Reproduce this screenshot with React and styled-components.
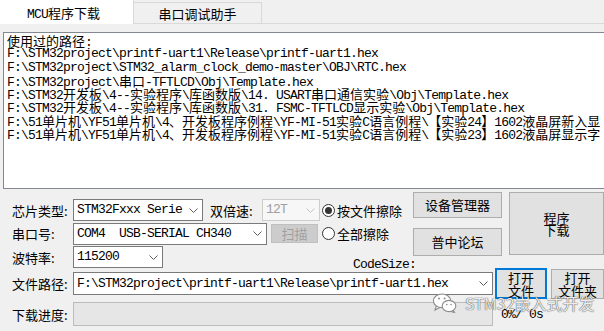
import styled, { createGlobalStyle, css } from 'styled-components'

const history = [
  '使用过的路径:',
  'F:\\STM32project\\printf-uart1\\Release\\printf-uart1.hex',
  'F:\\STM32project\\STM32_alarm_clock_demo-master\\OBJ\\RTC.hex',
  'F:\\STM32project\\串口-TFTLCD\\Obj\\Template.hex',
  'F:\\STM32开发板\\4--实验程序\\库函数版\\14. USART串口通信实验\\Obj\\Template.hex',
  'F:\\STM32开发板\\4--实验程序\\库函数版\\31. FSMC-TFTLCD显示实验\\Obj\\Template.hex',
  'F:\\51单片机\\YF51单片机\\4、开发板程序例程\\YF-MI-51实验C语言例程\\【实验24】1602液晶屏新入显',
  'F:\\51单片机\\YF51单片机\\4、开发板程序例程\\YF-MI-51实验C语言例程\\【实验23】1602液晶屏显示字',
]

// latin runs are 7px wide, han runs 13px, like the old bitmap font
const HAN = /([\u2e80-\u9fff\u3000-\u303f\uff00-\uffef]+)/
const Mixed = ({ text }) =>
  text.split(HAN).map((s, i) => (i % 2 ? <Han key={i}>{s}</Han> : s))

const Chevron = ({ off }) => (
  <Caret>
    <svg width="9" height="5" viewBox="0 0 9 5">
      <polyline points="0.5,0.5 4.5,4.5 8.5,0.5" fill="none" stroke={off ? '#c4c4c4' : '#606060'} strokeWidth="1" />
    </svg>
  </Caret>
)

const Select = ({ value, w, h, ml, off }) => (
  <Combo $w={w} $h={h} $ml={ml} $off={off}>
    <ComboText><Mixed text={value} /></ComboText>
    <Chevron off={off} />
  </Combo>
)

const Radio = ({ checked, label, ml }) => (
  <RadioWrap $ml={ml}>
    <RadioDot $on={checked} />
    <span>{label}</span>
  </RadioWrap>
)

const WeChat = () => (
  <svg width="25" height="20" viewBox="0 0 25 20">
    <g fill="#fff" stroke="#8c8c8c" strokeWidth="1.1">
      <polygon points="4.5,12.5 3,17 8.5,14" />
      <ellipse cx="10" cy="7.8" rx="8.6" ry="6.8" />
      <polygon points="20.5,16.5 22.5,19.5 17.5,18" />
      <ellipse cx="17" cy="13" rx="6.8" ry="5.6" />
    </g>
    <g fill="#8c8c8c">
      <circle cx="7" cy="5.6" r="1" />
      <circle cx="12.6" cy="5.6" r="1" />
      <circle cx="14.8" cy="11.6" r="0.8" />
      <circle cx="19" cy="11.6" r="0.8" />
    </g>
  </svg>
)

export default () => {
  return (
    <Page>
      <Global />
      <TabStrip>
        <Tab $w={134} $active><TabLabel><Mixed text="MCU程序下载" /></TabLabel></Tab>
        <Tab $w={128}><TabLabel>串口调试助手</TabLabel></Tab>
      </TabStrip>

      <TextBox>
        {history.map((l, i) => <Line key={i}><Mixed text={l} /></Line>)}
      </TextBox>

      <Controls>
        <Fields>
          <Row>
            <Label>芯片类型:</Label>
            <Select value="STM32Fxxx Serie" w={130} />
            <Label $w={52} $ml={7}>双倍速:</Label>
            <Select value="12T" w={58} off />
            <Radio checked label="按文件擦除" ml={2} />
          </Row>
          <Row>
            <Label>串口号:</Label>
            <Select value="COM4  USB-SERIAL CH340" w={194} />
            <Btn $w={47} $h={19} $m="0 0 0 4px" disabled>扫描</Btn>
            <Radio label="全部擦除" ml={4} />
          </Row>
          <Row>
            <Label>波特率:</Label>
            <Select value="115200" w={90} />
            <Note>CodeSize:</Note>
          </Row>
        </Fields>
        <Side>
          <Btn $w={89} $h={26}>设备管理器</Btn>
          <Btn $w={89} $h={28}>普中论坛</Btn>
        </Side>
        <Btn $w={95} $h={63} $m="3px 0 0 7px" $lh={12}>程序<br />下载</Btn>
      </Controls>

      <WideRow $h={31}>
        <Label>文件路径:</Label>
        <Select value="F:\STM32project\printf-uart1\Release\printf-uart1.hex" w={420} h={23} />
        <Btn $w={52} $h={31} $m="0 0 0 2px" $lh={13} $focus>打开<br />文件</Btn>
        <Btn $w={53} $h={30} $m="0 0 0 4px" $lh={13}>打开<br />文件夹</Btn>
      </WideRow>

      <WideRow $h={24} $mt={3}>
        <Label>下载进度:</Label>
        <Progress />
        <Percent>0%/ 0s</Percent>
      </WideRow>

      <Watermark>
        <WeChat />
        <MarkText>STM32嵌入式开发</MarkText>
      </Watermark>
    </Page>
  )
}

const mono = css`
font-family: "Liberation Mono", monospace;
font-size: 13px;
letter-spacing: -0.8px;
`

const Global = createGlobalStyle`
body { margin: 0; background: #f0f0f0; }
`
const Page = styled.div`
position: relative;
width: 604px;
height: 331px;
overflow: hidden;
background: #f0f0f0;
font-family: "Noto Sans CJK SC", sans-serif;
font-size: 13px;
color: #000;
`
const Han = styled.span`
font-family: "Noto Sans CJK SC", sans-serif;
font-size: 13px;
letter-spacing: 0;
`
const TabStrip = styled.div`
display: flex;
align-items: flex-end;
height: 24px;
box-sizing: border-box;
border-bottom: 1px solid #d9d9d9;
`
const Tab = styled.div`
box-sizing: border-box;
display: flex;
align-items: center;
justify-content: ${p => (p.$active ? 'flex-start' : 'center')};
width: ${p => p.$w}px;
height: ${p => (p.$active ? 24 : 21)}px;
margin-bottom: ${p => (p.$active ? -1 : 0)}px;
padding: ${p => (p.$active ? '0 0 0 27px' : '1px 0 0 0')};
background: ${p => (p.$active ? '#fff' : '#f0f0f0')};
border: solid #d9d9d9;
border-width: ${p => (p.$active ? '0 1px 0 0' : '1px 1px 0 0')};
${p => p.$active && mono}
`
const TabLabel = styled.span`
white-space: pre;
`
const TextBox = styled.div`
box-sizing: border-box;
margin: 8px 0 0 3px;
width: 602px;
height: 157px;
padding: 1px 0 0 3px;
background: #fff;
border: 1px solid #828790;
overflow: hidden;
`
const Line = styled.div`
height: 13.3px;
line-height: 13.3px;
white-space: pre;
${mono}
`
const Controls = styled.div`
display: flex;
height: 79px;
`
const Fields = styled.div`
box-sizing: border-box;
display: flex;
flex-direction: column;
gap: 1.5px;
width: 413px;
padding: 10px 0 0 12px;
`
const Row = styled.div`
display: flex;
align-items: center;
height: 22px;
`
const Label = styled.div`
flex-shrink: 0;
width: ${p => p.$w ?? 61}px;
margin-left: ${p => p.$ml ?? 0}px;
white-space: nowrap;
`
const Combo = styled.div`
box-sizing: border-box;
display: flex;
align-items: center;
flex-shrink: 0;
width: ${p => p.$w}px;
height: ${p => p.$h ?? 22}px;
margin-left: ${p => p.$ml ?? 0}px;
padding-left: 3px;
background: ${p => (p.$off ? '#f7f7f7' : '#fff')};
border: 1px solid ${p => (p.$off ? '#cccccc' : '#7a7a7a')};
color: ${p => (p.$off ? '#a0a0a0' : '#000')};
`
const ComboText = styled.div`
flex: 1;
overflow: hidden;
white-space: pre;
line-height: 14px;
${mono}
`
const Caret = styled.div`
display: flex;
justify-content: center;
flex-shrink: 0;
width: 18px;
`
const Btn = styled.button`
box-sizing: border-box;
flex-shrink: 0;
width: ${p => p.$w}px;
height: ${p => p.$h}px;
margin: ${p => p.$m ?? 0};
padding: 0;
font: inherit;
line-height: ${p => p.$lh ?? 16}px;
color: #000;
background: #e1e1e1;
border: ${p => (p.$focus ? '2px solid #0078d7' : '1px solid #adadad')};
border-radius: 0;
&:disabled {
  background: #cccccc;
  border-color: #bfbfbf;
  color: #a0a0a0;
}
`
const RadioWrap = styled.label`
display: flex;
align-items: center;
margin-left: ${p => p.$ml}px;
white-space: nowrap;
`
const RadioDot = styled.span`
box-sizing: border-box;
display: flex;
align-items: center;
justify-content: center;
width: 13px;
height: 13px;
margin-right: 2px;
border-radius: 50%;
border: 1px solid #333;
background: #fff;
&::after {
  content: '';
  width: 7px;
  height: 7px;
  border-radius: 50%;
  background: ${p => (p.$on ? '#333' : 'transparent')};
}
`
const Note = styled.div`
align-self: flex-end;
margin: 0 0 -3px 190px;
line-height: 13px;
white-space: pre;
${mono}
`
const Side = styled.div`
display: flex;
flex-direction: column;
gap: 10px;
width: 89px;
padding-top: 3px;
`
const WideRow = styled.div`
display: flex;
align-items: center;
height: ${p => p.$h}px;
margin-top: ${p => p.$mt ?? 0}px;
padding-left: 12px;
`
const Progress = styled.div`
box-sizing: border-box;
width: 420px;
height: 24px;
background: #e6e6e6;
border: 1px solid #bcbcbc;
`
const Percent = styled.span`
margin-left: 8px;
white-space: pre;
${mono}
`
const Watermark = styled.div`
position: absolute;
left: 432px;
top: 293px;
display: flex;
align-items: center;
gap: 8px;
pointer-events: none;
`
const MarkText = styled.span`
font-family: "Noto Sans CJK SC", sans-serif;
font-size: 16px;
line-height: 20px;
color: rgba(255, 255, 255, 0.92);
text-shadow: 0 0 1px rgba(0, 0, 0, 0.6), 0 0 1px rgba(0, 0, 0, 0.6);
`
